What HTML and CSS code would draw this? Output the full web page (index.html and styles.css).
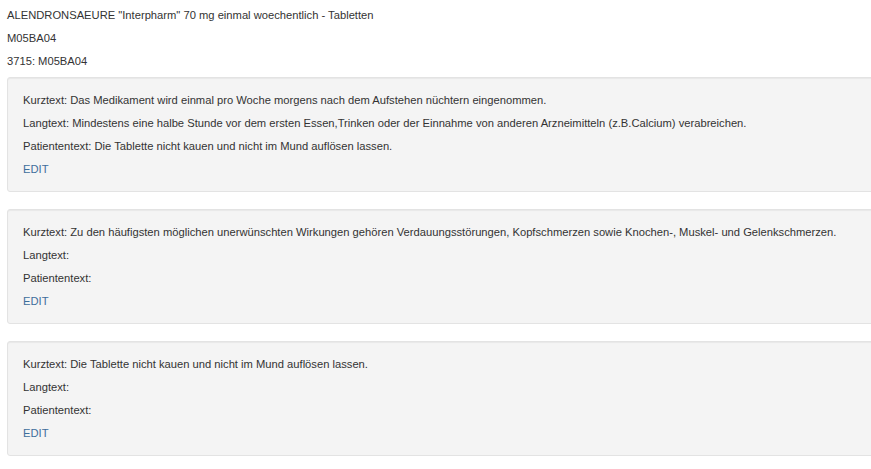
FILE: index.html
```html
<!DOCTYPE html>
<html>
<head>
<meta charset="utf-8">
<link rel="stylesheet" href="styles.css">
</head>
<body>
<div class="page">
  <div class="line">ALENDRONSAEURE "Interpharm" 70 mg einmal woechentlich - Tabletten</div>
  <div class="line">M05BA04</div>
  <div class="line">3715: M05BA04</div>
  <div class="list">
    <div class="well">
      <div class="line">Kurztext: Das Medikament wird einmal pro Woche morgens nach dem Aufstehen nüchtern eingenommen.</div>
      <div class="line">Langtext: Mindestens eine halbe Stunde vor dem ersten Essen,Trinken oder der Einnahme von anderen Arzneimitteln (z.B.Calcium) verabreichen.</div>
      <div class="line">Patiententext: Die Tablette nicht kauen und nicht im Mund auflösen lassen.</div>
      <div class="line"><a class="edit" href="#">EDIT</a></div>
    </div>
    <div class="well">
      <div class="line">Kurztext: Zu den häufigsten möglichen unerwünschten Wirkungen gehören Verdauungsstörungen, Kopfschmerzen sowie Knochen-, Muskel- und Gelenkschmerzen.</div>
      <div class="line">Langtext:</div>
      <div class="line">Patiententext:</div>
      <div class="line"><a class="edit" href="#">EDIT</a></div>
    </div>
    <div class="well">
      <div class="line">Kurztext: Die Tablette nicht kauen und nicht im Mund auflösen lassen.</div>
      <div class="line">Langtext:</div>
      <div class="line">Patiententext:</div>
      <div class="line"><a class="edit" href="#">EDIT</a></div>
    </div>
  </div>
</div>
</body>
</html>
```
FILE: styles.css
```css
html, body {
  margin: 0;
  padding: 0;
  overflow: hidden;
  background: #fff;
}
body {
  font-family: "Liberation Sans", Arial, sans-serif;
  font-size: 11.2px;
  color: #333;
}
.page {
  padding: 4px 0 0 7px;
  width: 890px;
}
.line {
  line-height: 23px;
  white-space: nowrap;
}
.list {
  display: flex;
  flex-direction: column;
  gap: 17px;
  margin-top: 4px;
}
.well {
  background: #f4f4f4;
  border: 1px solid #e3e3e3;
  border-radius: 3px;
  box-shadow: inset 0 1px 1px rgba(0,0,0,0.05);
  padding: 11px 15px 10px;
}
.edit {
  color: #3f6e9c;
  text-decoration: none;
}
```
